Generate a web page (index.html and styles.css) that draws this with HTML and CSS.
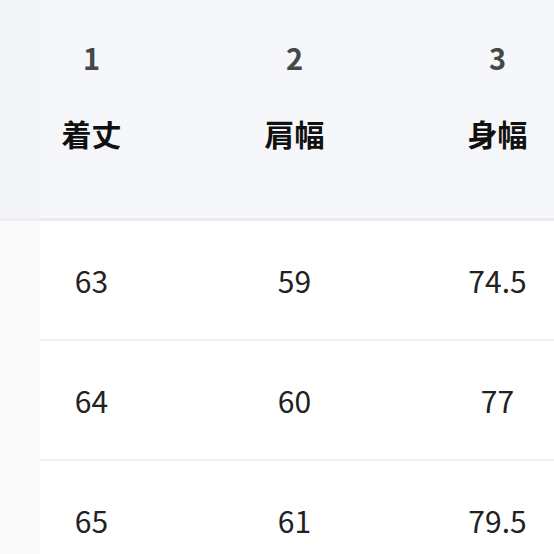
FILE: index.html
```html
<!DOCTYPE html>
<html lang="ja">
<head>
<meta charset="utf-8">
<link rel="stylesheet" href="styles.css">
</head>
<body>
<div class="viewport">
  <div class="table">
    <div class="head">
      <div class="hcell"><span class="num">1</span><span class="label">着丈</span></div>
      <div class="hcell"><span class="num">2</span><span class="label">肩幅</span></div>
      <div class="hcell"><span class="num">3</span><span class="label">身幅</span></div>
    </div>
    <div class="row"><div class="cell">63</div><div class="cell">59</div><div class="cell">74.5</div></div>
    <div class="row"><div class="cell">64</div><div class="cell">60</div><div class="cell">77</div></div>
    <div class="row"><div class="cell">65</div><div class="cell">61</div><div class="cell">79.5</div></div>
  </div>
  <div class="stub"></div>
</div>
</body>
</html>
```
FILE: styles.css
```css
html, body {
  margin: 0;
  padding: 0;
  background: #ffffff;
}
.viewport {
  position: relative;
  width: 554px;
  height: 554px;
  overflow: hidden;
  font-family: "Noto Sans CJK JP", "Noto Sans", sans-serif;
}
.table {
  margin-left: -10px;
  width: 609px;
}
.head {
  display: grid;
  grid-template-columns: 203px 203px 203px;
  height: 218px;
  background: #f5f7fa;
  border-bottom: 3px solid #e9ebee;
}
.hcell {
  display: flex;
  flex-direction: column;
  align-items: center;
  padding-top: 37px;
  gap: 36px;
}
.num {
  font-size: 29px;
  line-height: 40px;
  font-weight: 700;
  color: #454749;
}
.label {
  font-size: 30px;
  line-height: 40px;
  font-weight: 700;
  color: #111111;
}
.row {
  display: grid;
  grid-template-columns: 203px 203px 203px;
  height: 118px;
  border-bottom: 2px solid #f1f2f4;
  background: #ffffff;
}
.cell {
  display: flex;
  align-items: center;
  justify-content: center;
  font-size: 30px;
  color: #222222;
}
.stub {
  position: absolute;
  left: 0;
  top: 0;
  width: 40px;
  height: 554px;
  background: linear-gradient(#f3f5f8 0, #f3f5f8 218px, #eceef1 218px, #eceef1 221px, #fafafb 221px);
}
```
